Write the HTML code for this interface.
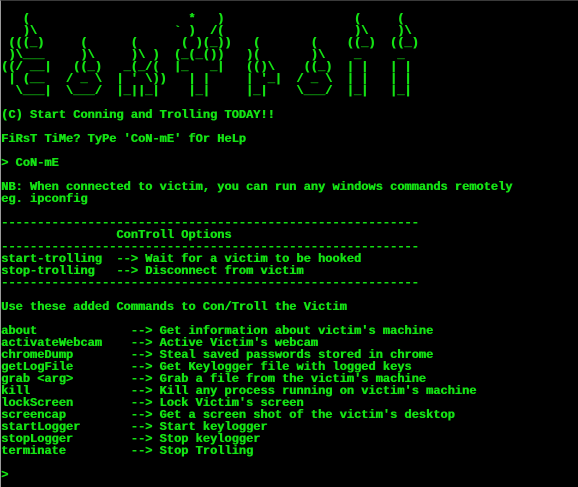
<!DOCTYPE html>
<html><head><meta charset="utf-8"><style>
html,body{margin:0;padding:0;background:#000;}
body{width:578px;height:487px;overflow:hidden;position:relative;box-sizing:border-box;border-top:1px solid #3a3a3a;border-left:1px solid #9a9a9a;}
pre{position:absolute;left:0px;top:12px;margin:0;font-family:"Liberation Mono",monospace;font-weight:bold;font-size:12px;line-height:12px;color:#14e214;white-space:pre;text-shadow:0.5px 0 0 #14e214;}
</style></head><body><pre>   (                      *   )                  (     (
   )\                   ` )  /(                  )\    )\
 (((_)     (      (      ( )(_))   (       (    ((_)  ((_)
 )\___     )\     )\ )  (_(_())   )(       )\    _     _
((/ __|   ((_)   _(_/(  |_   _|   (()\    ((_)  | |   | |
 | (__   / _ \  | ' \))   | |     | '_|  / _ \  | |   | |
  \___|  \___/  |_||_|    |_|     |_|    \___/  |_|   |_|

(C) Start Conning and Trolling TODAY!!

FiRsT TiMe? TyPe 'CoN-mE' fOr HeLp

&gt; CoN-mE

NB: When connected to victim, you can run any windows commands remotely
eg. ipconfig

----------------------------------------------------------
                ConTroll Options
----------------------------------------------------------
start-trolling  --&gt; Wait for a victim to be hooked
stop-trolling   --&gt; Disconnect from victim
----------------------------------------------------------

Use these added Commands to Con/Troll the Victim

about             --&gt; Get information about victim's machine
activateWebcam    --&gt; Active Victim's webcam
chromeDump        --&gt; Steal saved passwords stored in chrome
getLogFile        --&gt; Get Keylogger file with logged keys
grab &lt;arg&gt;        --&gt; Grab a file from the victim's machine
kill              --&gt; Kill any process running on victim's machine
lockScreen        --&gt; Lock Victim's screen
screencap         --&gt; Get a screen shot of the victim's desktop
startLogger       --&gt; Start keylogger
stopLogger        --&gt; Stop keylogger
terminate         --&gt; Stop Trolling

&gt;</pre></body></html>
